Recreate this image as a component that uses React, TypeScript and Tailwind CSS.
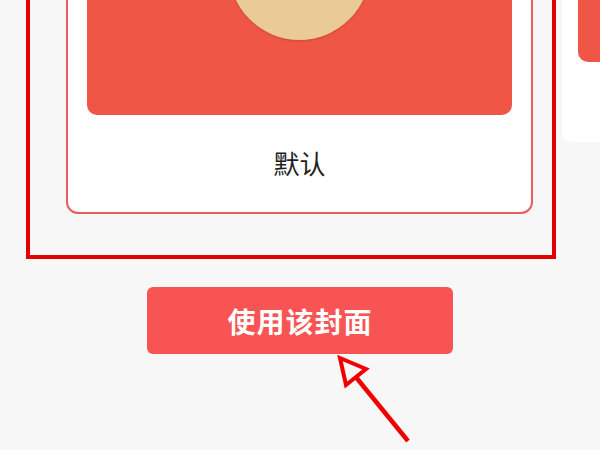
import React from 'react';

const font = { fontFamily: '"Noto Sans CJK SC", "Noto Sans", sans-serif' };

export default function App() {
  return (
    <div className="relative w-[600px] h-[450px] overflow-hidden bg-[#f7f7f7]" style={font}>
      {/* cover carousel */}
      <div className="flex items-start gap-[29px] pl-[66px] -mt-[186px]">
        <div className="shrink-0 w-[467px] h-[400px] flex flex-col bg-white border-2 border-[#ec5c5c] rounded-[12px] px-[19px] pt-[19px]">
          <div className="h-[280px] shrink-0 flex justify-center pt-[64px] bg-[#f05645] rounded-[10px] overflow-hidden">
            <div className="w-[141px] h-[141px] rounded-full bg-[#eaca97] shadow-[0_1px_2px_rgba(160,70,30,0.55)]" />
          </div>
          <div className="flex-1 flex items-center justify-center pb-[2px]">
            <span className="text-[26px] leading-none text-[#1f1f1f]">默认</span>
          </div>
        </div>

        <div className="shrink-0 w-[420px] h-[292px] mt-[36px] flex flex-col bg-white rounded-[10px] px-[16px] pt-[16px]">
          <div className="h-[196px] shrink-0 bg-[#f05645] rounded-[10px]" />
        </div>
      </div>

      <button className="mt-[73px] ml-[147px] w-[306px] h-[67px] flex items-center justify-center bg-[#f95454] rounded-[6px] text-white text-[28px] font-bold leading-none tracking-[1px]">
        使用该封面
      </button>

      {/* highlight frame */}
      <div className="absolute left-[26px] top-[-10px] w-[530px] h-[269px] border-[4px] border-[#e40000]" />

      {/* pointer arrow */}
      <svg className="absolute inset-0" width="600" height="450" viewBox="0 0 600 450">
        <polygon points="340,358 366,369 346,385" fill="none" stroke="#f20000" strokeWidth="4" strokeLinejoin="miter" />
        <line x1="355" y1="376" x2="408" y2="441" stroke="#f20000" strokeWidth="4.5" />
      </svg>
    </div>
  );
}
